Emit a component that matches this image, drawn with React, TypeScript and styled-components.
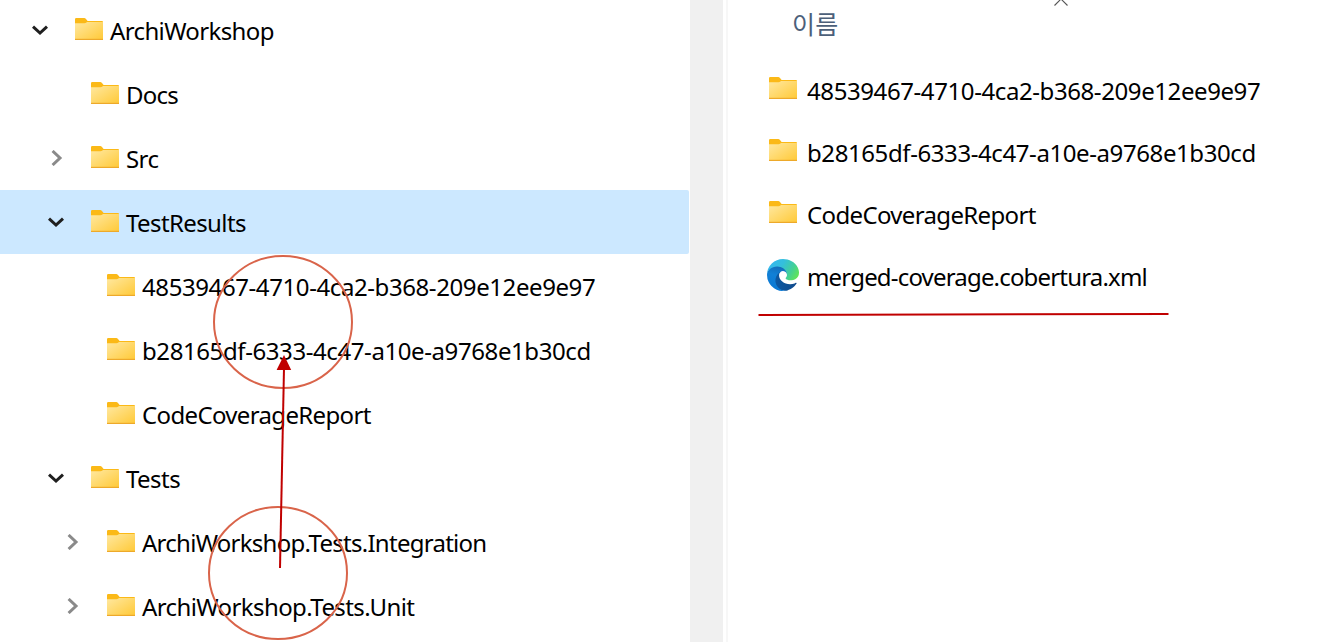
import React from 'react';
import styled, { createGlobalStyle } from 'styled-components';

const GlobalStyle = createGlobalStyle`
  html, body { margin: 0; padding: 0; background: #fff; overflow: hidden; }
  body { font-family: "Noto Sans", "Noto Sans CJK KR", sans-serif; color: #000; }
`;

const Window = styled.main`
  position: relative;
  display: flex;
  width: 1325px;
  height: 642px;
  overflow: hidden;
  background: #fff;
`;

const TreePane = styled.nav`
  width: 689px;
  flex: none;
  margin-right: 1px;
  margin-top: -2px;
`;

const TreeRow = styled.div<{ $level: number; $selected?: boolean }>`
  display: flex;
  align-items: center;
  box-sizing: border-box;
  height: 64px;
  padding-top: 2px;
  padding-left: ${(p) => 32 + p.$level * 16}px;
  background: ${(p) => (p.$selected ? '#cce8ff' : 'transparent')};
  border-radius: 0 2px 2px 0;
`;

const Toggle = styled.span`
  display: flex;
  width: 16px;
  height: 16px;
  margin: 0 27px 2px 0;
`;

const FolderSlot = styled.span<{ $gap: number; $lift: number }>`
  display: flex;
  width: 28px;
  height: 22px;
  margin: 0 ${(p) => p.$gap}px ${(p) => p.$lift}px 0;
`;

const Label = styled.span<{ $spacing: number; $size?: number }>`
  font-size: ${(p) => p.$size ?? 24}px;
  line-height: 32px;
  white-space: nowrap;
  letter-spacing: ${(p) => p.$spacing}px;
`;

const Splitter = styled.div`
  width: 33px;
  flex: none;
  background: #f0f0f0;
`;

const ListPane = styled.section`
  flex: 1;
  margin-left: 3px;
  border-left: 2px solid #f7f7f7;
`;

const ListHeader = styled.header`
  position: relative;
  display: flex;
  align-items: center;
  height: 48px;
  margin-bottom: 12px;
  padding-left: 64px;
  color: #4c607a;
`;

const SortMark = styled.svg`
  position: absolute;
  left: 326px;
  top: -2px;
`;

const ListRow = styled.div`
  display: flex;
  align-items: center;
  height: 62px;
  padding-left: 41px;
`;

const EdgeSlot = styled.span`
  display: flex;
  width: 32px;
  height: 32px;
  margin: 0 8px 4px -2px;
`;

const Annotations = styled.svg`
  position: absolute;
  inset: 0;
  pointer-events: none;
`;

function Chevron({ open }: { open: boolean }) {
  return (
    <svg width="16" height="16" viewBox="0 0 16 16" fill="none" strokeWidth="3">
      {open ? (
        <path d="M1 4.6 8 11 15 4.6" stroke="#1f1f1f" />
      ) : (
        <path d="M4.6 1 12 8 4.6 15" stroke="#8a8a8a" />
      )}
    </svg>
  );
}

function Folder() {
  return (
    <svg width="28" height="22" viewBox="0 0 28 22">
      <path d="M0 1.2Q0 0 1.2 0H9.2Q10.2 0 11 1L12.6 3H27Q28 3 28 4V10H0Z" fill="#fbb917" />
      <path d="M0 5.2H9.5Q10.6 5.2 11.4 4.6L12 4H28V21Q28 22 27 22H1Q0 22 0 21Z" fill="url(#folderFace)" />
      <path d="M0 21.4H28" stroke="#eda92a" strokeWidth="1.2" />
    </svg>
  );
}

function EdgeLogo() {
  return (
    <svg width="32" height="32" viewBox="0 0 256 256">
      <path fill="url(#edgeDark)" d="M231.2 190.5a94 94 0 0 1-10.5 4.7 102 102 0 0 1-36 6.4c-47.3 0-88.5-32.5-88.5-74.3a31.5 31.5 0 0 1 16.4-27.3c-42.8 1.8-53.8 46.4-53.8 72.5 0 74 68.1 81.4 82.8 81.4 7.9 0 19.8-2.3 27-4.6l1.3-.4a128.3 128.3 0 0 0 66.6-52.8 4 4 0 0 0-5.3-5.6Z" />
      <path fill="url(#edgeBlue)" d="M105.7 241.4A79.2 79.2 0 0 1 83 220.1a80.7 80.7 0 0 1 29.5-120.2c3.1-1.5 8.5-4.1 15.5-4a32.4 32.4 0 0 1 25.7 13 31.9 31.9 0 0 1 6.4 18.7c0-.2 24.5-79.6-80-79.6-43.9 0-80 41.6-80 78.2a130 130 0 0 0 12.1 56 128 128 0 0 0 156.4 67.1 75.6 75.6 0 0 1-62.8-8Z" />
      <path fill="url(#edgeGreen)" d="M152.3 148.9c-.8 1-3.3 2.5-3.3 5.6 0 2.6 1.7 5.1 4.7 7.2 14.4 10 41.5 8.7 41.6 8.7a59.6 59.6 0 0 0 30.3-8.3A61.4 61.4 0 0 0 256 109.2c.3-22.4-8-37.3-11.3-43.9C223.5 23.8 177.7 0 128 0A128 128 0 0 0 0 126.2c.5-36.5 36.8-66 80-66 3.5 0 23.5.3 42 10 16.3 8.6 24.9 19 30.8 29.2 6.2 10.7 7.3 24.2 7.3 29.5 0 5.4-2.7 13.4-7.8 20Z" />
    </svg>
  );
}

type Node = { name: string; level: number; open?: boolean; selected?: boolean; spacing: number };

const tree: Node[] = [
  { name: 'ArchiWorkshop', level: 0, open: true, spacing: -0.63 },
  { name: 'Docs', level: 1, spacing: -0.75 },
  { name: 'Src', level: 1, open: false, spacing: -0.6 },
  { name: 'TestResults', level: 1, open: true, selected: true, spacing: -0.6 },
  { name: '48539467-4710-4ca2-b368-209e12ee9e97', level: 2, spacing: -0.41 },
  { name: 'b28165df-6333-4c47-a10e-a9768e1b30cd', level: 2, spacing: -0.41 },
  { name: 'CodeCoverageReport', level: 2, spacing: -0.65 },
  { name: 'Tests', level: 1, open: true, spacing: -0.55 },
  { name: 'ArchiWorkshop.Tests.Integration', level: 2, open: false, spacing: -0.73 },
  { name: 'ArchiWorkshop.Tests.Unit', level: 2, open: false, spacing: -0.6 },
];

const files = [
  { name: '48539467-4710-4ca2-b368-209e12ee9e97', kind: 'folder', spacing: -0.41 },
  { name: 'b28165df-6333-4c47-a10e-a9768e1b30cd', kind: 'folder', spacing: -0.41 },
  { name: 'CodeCoverageReport', kind: 'folder', spacing: -0.65 },
  { name: 'merged-coverage.cobertura.xml', kind: 'edge', spacing: -0.82 },
];

export default function App() {
  return (
    <Window>
      <GlobalStyle />
      <TreePane>
        {tree.map((n) => (
          <TreeRow key={n.name} $level={n.level} $selected={n.selected}>
            <Toggle>{n.open !== undefined && <Chevron open={n.open} />}</Toggle>
            <FolderSlot $gap={7} $lift={5}><Folder /></FolderSlot>
            <Label $spacing={n.spacing}>{n.name}</Label>
          </TreeRow>
        ))}
      </TreePane>
      <Splitter />
      <ListPane>
        <ListHeader>
          <Label $spacing={0.2} $size={25}>이름</Label>
          <SortMark width="14" height="9" viewBox="0 0 14 9" fill="none" stroke="#555" strokeWidth="1.1">
            <path d="M.5 7.5 7 1 13.5 7.5" />
          </SortMark>
        </ListHeader>
        {files.map((f) => (
          <ListRow key={f.name}>
            {f.kind === 'edge' ? (
              <EdgeSlot><EdgeLogo /></EdgeSlot>
            ) : (
              <FolderSlot $gap={10} $lift={6}><Folder /></FolderSlot>
            )}
            <Label $spacing={f.spacing}>{f.name}</Label>
          </ListRow>
        ))}
      </ListPane>
      <Annotations width="1325" height="642" viewBox="0 0 1325 642" fill="none">
        <defs>
          <linearGradient id="folderFace" x1="0" y1="0" x2="1" y2="1">
            <stop offset="0" stopColor="#ffe8a0" />
            <stop offset="1" stopColor="#ffc936" />
          </linearGradient>
          <linearGradient id="edgeDark" x1="0" y1="0" x2="1" y2="0">
            <stop offset="0" stopColor="#0c59a4" />
            <stop offset="1" stopColor="#114a8b" />
          </linearGradient>
          <linearGradient id="edgeBlue" x1="0.6" y1="0" x2="0.4" y2="1">
            <stop offset="0" stopColor="#1469b4" />
            <stop offset="0.4" stopColor="#1180d6" />
            <stop offset="1" stopColor="#0a78d4" />
          </linearGradient>
          <linearGradient id="edgeGreen" x1="0" y1="0.3" x2="1" y2="0.7">
            <stop offset="0" stopColor="#35b8f1" />
            <stop offset="0.4" stopColor="#34bfdc" />
            <stop offset="0.75" stopColor="#44d194" />
            <stop offset="1" stopColor="#62e457" />
          </linearGradient>
        </defs>
        <g stroke="#d9644a" strokeWidth="2">
          <ellipse cx="283" cy="322" rx="69" ry="66" />
          <ellipse cx="278" cy="573" rx="69" ry="66" />
        </g>
        <path d="M280 568 284 368" stroke="#c00000" strokeWidth="2" />
        <path d="M284 355 291.2 370H276.6Z" fill="#c00000" />
        <path d="M758.5 315 1168.5 314" stroke="#c00000" strokeWidth="2" />
      </Annotations>
    </Window>
  );
}
